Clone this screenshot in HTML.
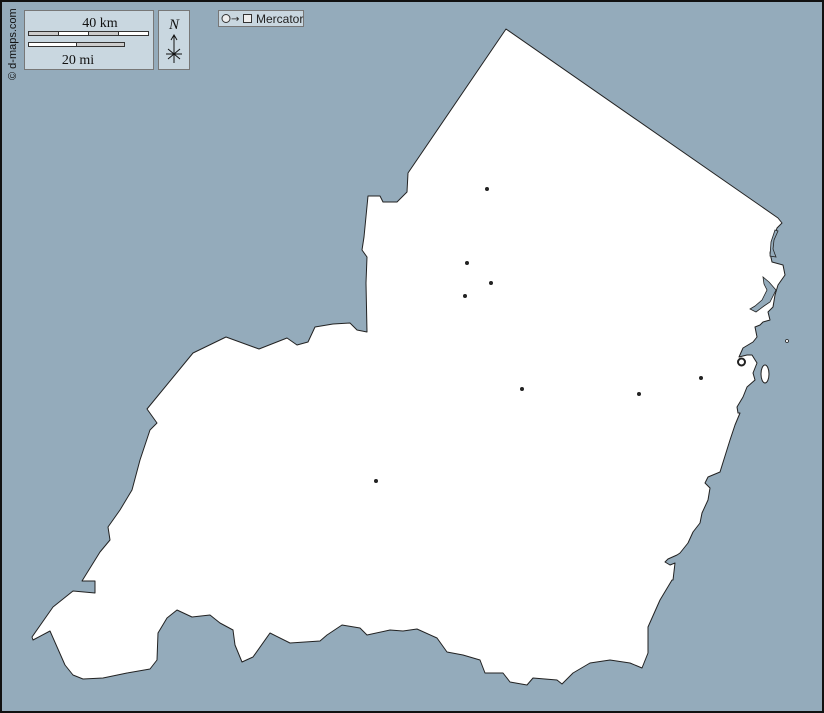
<!DOCTYPE html>
<html><head><meta charset="utf-8"><style>
html,body{margin:0;padding:0;}
body{width:824px;height:713px;overflow:hidden;background:#94abbb;font-family:"Liberation Serif",serif;}
</style></head><body>
<svg width="824" height="713" viewBox="0 0 824 713" xmlns="http://www.w3.org/2000/svg" style="position:absolute;left:0;top:0">
<rect x="0" y="0" width="824" height="713" fill="#94abbb"/>
<path fill="#fff" stroke="#222" stroke-width="1" stroke-linejoin="round" d="
M506,29 L778,218 L782,223 L777,228 L773,240 L770,253 L772,262 L783,265 L785,275 L778,285 L775,295 L773,307
L768,312 L770,320 L763,322 L760,325 L755,327 L757,337 L753,342 L743,348 L739,357 L747,355 L752,355 L757,363
L753,373 L755,380 L747,387 L743,397 L737,407 L738,413 L740,413 L735,425 L730,440 L725,456 L720,472 L708,477
L705,483 L710,488 L708,500 L702,513 L700,523 L693,532 L688,543 L680,553 L677,555 L668,559 L665,562 L670,565
L675,563 L673,580 L672,580 L660,600 L648,627 L648,653 L642,668 L630,663 L610,660 L590,663 L573,673 L562,684
L557,680 L533,678 L527,685 L510,682 L503,673 L485,673 L480,660 L463,655 L447,652 L437,638 L417,629 L403,631
L390,630 L367,635 L360,628 L342,625 L327,635 L320,641 L290,643 L270,633 L253,657 L242,662 L235,645 L233,630
L220,623 L210,615 L192,617 L177,610 L167,618 L158,633 L157,660 L150,669 L127,673 L103,678 L83,679 L73,675
L65,665 L50,631 L33,640 L32,637 L53,607 L73,591 L95,593 L95,581 L82,581 L100,552 L110,540 L108,527
L120,510 L132,490 L140,460 L150,430 L157,423 L147,409 L193,353 L226,337 L259,349 L287,338 L297,345 L308,342
L315,327 L333,324 L350,323 L357,330 L367,332 L366,283 L367,257 L362,250 L364,237 L368,196 L380,196 L383,202
L397,202 L407,192 L408,173 Z"/>
<path fill="#94abbb" stroke="#222" stroke-width="0.8" d="M775,230 L771,242 L770,256 L776,257 L773,249 L774,240 L778,231 Z"/>
<path fill="#94abbb" stroke="#222" stroke-width="0.8" d="M776,290 L769,282 L763,277 L764,284 L767,290 L762,300 L755,306 L750,309 L756,312 L764,306 L770,302 Z"/>
<ellipse cx="765" cy="374" rx="4" ry="9" fill="#fff" stroke="#222" stroke-width="1"/>
<circle cx="787" cy="341" r="1.5" fill="#fff" stroke="#222" stroke-width="0.8"/>
<circle cx="741.5" cy="362" r="3.5" fill="#fff" stroke="#222" stroke-width="2"/>
<g fill="#222">
<circle cx="487" cy="189" r="2"/><circle cx="467" cy="263" r="2"/><circle cx="491" cy="283" r="2"/>
<circle cx="465" cy="296" r="2"/><circle cx="522" cy="389" r="2"/><circle cx="639" cy="394" r="2"/>
<circle cx="701" cy="378" r="2"/><circle cx="376" cy="481" r="2"/>
</g>
<rect x="24.5" y="10.5" width="129" height="59" fill="#c9d7e0" stroke="#777"/>
<text x="100" y="27" font-size="14" text-anchor="middle" fill="#111" font-family="Liberation Serif,serif">40 km</text>
<rect x="28.5" y="31.5" width="120" height="4" fill="#fff" stroke="#333"/>
<rect x="28.5" y="31.5" width="30" height="4" fill="#ccc" stroke="#333"/>
<rect x="88.5" y="31.5" width="30" height="4" fill="#ccc" stroke="#333"/>
<rect x="28.5" y="42.5" width="96" height="4" fill="#fff" stroke="#333"/>
<rect x="76.5" y="42.5" width="48" height="4" fill="#ccc" stroke="#333"/>
<text x="78" y="64" font-size="14" text-anchor="middle" fill="#111" font-family="Liberation Serif,serif">20 mi</text>
<rect x="158.5" y="10.5" width="31" height="59" fill="#c9d7e0" stroke="#777"/>
<text x="174" y="29" font-size="15" font-style="italic" text-anchor="middle" fill="#111" font-family="Liberation Serif,serif">N</text>
<g stroke="#111" stroke-width="1" fill="none">
<line x1="174" y1="35" x2="174" y2="63"/>
<path d="M171,40 L174,35 L177,40"/>
<line x1="166" y1="54" x2="182" y2="54"/>
<line x1="168" y1="49" x2="180" y2="59"/>
<line x1="168" y1="59" x2="180" y2="49"/>
</g>
<rect x="218.5" y="10.5" width="85" height="16" fill="#c9d7e0" stroke="#777"/>
<circle cx="226" cy="18.5" r="4" fill="#eee" stroke="#333"/>
<text x="231" y="22" font-size="10" fill="#222" font-family="DejaVu Sans,sans-serif">→</text>
<rect x="243.5" y="14.5" width="8" height="8" fill="#eee" stroke="#333"/>
<text x="256" y="23" font-size="12" fill="#222" font-family="Liberation Sans,sans-serif">Mercator</text>
<text transform="translate(16,80) rotate(-90)" font-size="11" fill="#111" font-family="Liberation Sans,sans-serif">© d-maps.com</text>
<rect x="1" y="1" width="822" height="711" fill="none" stroke="#111" stroke-width="2"/>
</svg>
</body></html>
